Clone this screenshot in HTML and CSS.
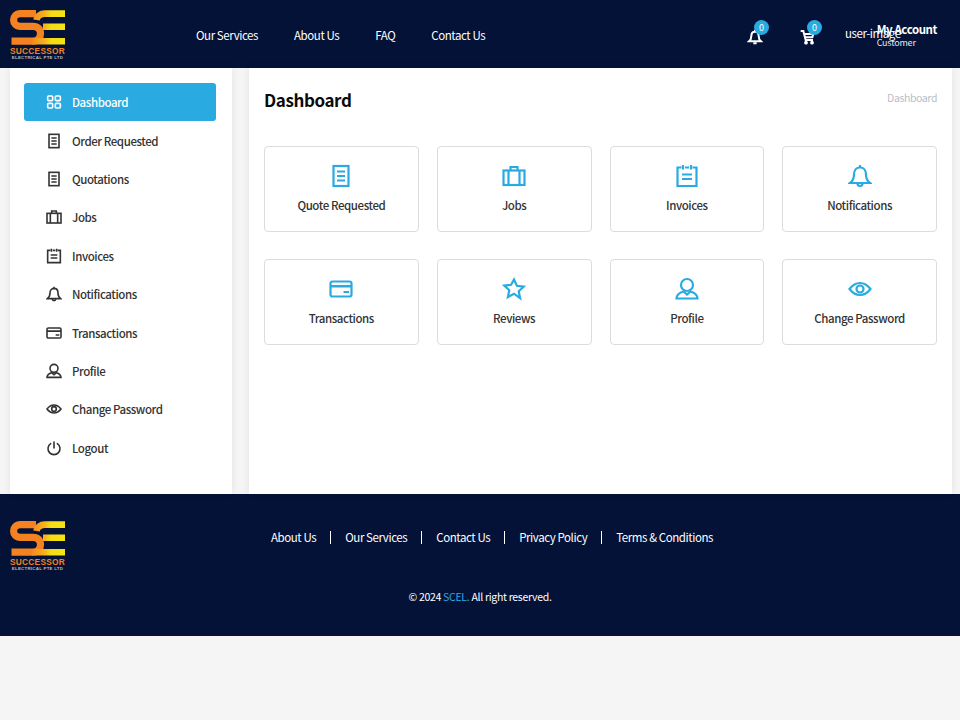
FILE: index.html
```html
<!DOCTYPE html>
<html lang="en">
<head>
<meta charset="utf-8">
<title>Dashboard</title>
<link rel="stylesheet" href="styles.css">
</head>
<body>
<svg class="defs" width="0" height="0" aria-hidden="true">
  <defs>
    <linearGradient id="eg" gradientUnits="userSpaceOnUse" x1="20" x2="55" y1="0" y2="0"><stop offset="0" stop-color="#f58220"/><stop offset=".42" stop-color="#f7b21c"/><stop offset=".6" stop-color="#f5dc14"/><stop offset="1" stop-color="#f5e314"/></linearGradient>
  </defs>
  <symbol id="i-grid" viewBox="0 0 24 24"><g fill="none" stroke="currentColor"><rect x="2.500" y="3" width="7.500" height="7" rx="1.500"/><rect x="14" y="3" width="7.500" height="7" rx="1.500"/><rect x="2.500" y="14" width="7.500" height="7" rx="1.500"/><rect x="14" y="14" width="7.500" height="7" rx="1.500"/></g></symbol>
  <symbol id="i-doc" viewBox="0 0 24 24"><g fill="none" stroke="currentColor"><rect x="4.500" y="2" width="15" height="20"/><path d="M8 7.500h8M8 12h8M8 16.500h8"/></g></symbol>
  <symbol id="i-case" viewBox="0 0 24 24"><g fill="none" stroke="currentColor"><rect x="1.500" y="6.500" width="21" height="14.500"/><path d="M6.500 6.500v14.500M17.500 6.500v14.500M8.500 6.500V3h7v3.500"/></g></symbol>
  <symbol id="i-inv" viewBox="0 0 24 24"><g fill="none" stroke="currentColor"><path d="M6.500 3.500H2.500v18.500h19V3.500h-4M10 3.500h4"/><path d="M8 1v4.500M16 1v4.500M7 10.500h10M7 15h10"/></g></symbol>
  <symbol id="i-bell" viewBox="0 0 24 24"><g fill="none" stroke="currentColor"><path d="M12 3.500c-3.800 0-6 3-6 7 0 4.500-1.200 6.500-4 8.500h20c-2.800-2-4-4-4-8.500 0-4-2.200-7-6-7z"/><path d="M12 1v2.500M9.500 19.500a2.500 2.500 0 0 0 5 0"/></g></symbol>
  <symbol id="i-bell-solid" viewBox="0 0 24 24"><g fill="none" stroke="currentColor" stroke-width="3"><path d="M12 4c-3.500 0-5.500 2.800-5.500 6.500 0 4.500-1 6-3.500 8h18c-2.500-2-3.500-3.500-3.500-8C17.500 6.800 15.500 4 12 4z"/><path d="M12 1v3M9.500 21.500h5"/></g></symbol>
  <symbol id="i-card" viewBox="0 0 24 24"><g fill="none" stroke="currentColor"><rect x="1.500" y="4.500" width="21" height="15" rx="2"/></g><path d="M1.500 8h21v2.500h-21zM14.500 14h5.500v2h-5.500z" fill="currentColor"/></symbol>
  <symbol id="i-star" viewBox="0 0 24 24"><path d="M12 2.500l2.900 6.300 6.900.8-5.100 4.700 1.400 6.800L12 16.700l-6.100 3.400 1.400-6.800-5.100-4.700 6.900-.8z" fill="none" stroke="currentColor"/></symbol>
  <symbol id="i-user" viewBox="0 0 24 24"><g fill="none" stroke="currentColor"><circle cx="12" cy="8" r="6"/><path d="M8.500 14.500C5 15.500 1.800 17.500 1.500 21.500h21c-.3-4-3.500-6-7-7L12 17.500z"/></g></symbol>
  <symbol id="i-eye" viewBox="0 0 24 24"><g fill="none" stroke="currentColor"><path d="M1.500 12C5 7.500 8.500 6 12 6s7 1.500 10.500 6C19 16.500 15.500 18 12 18S5 16.500 1.500 12z"/><circle cx="12" cy="12" r="3.500"/></g></symbol>
  <symbol id="i-power" viewBox="0 0 24 24"><g fill="none" stroke="currentColor" stroke-linecap="round"><path d="M12 3v9M7 5.500a9 9 0 1 0 10 0"/></g></symbol>
  <symbol id="i-cart" viewBox="0 0 24 24"><g fill="none" stroke="currentColor" stroke-width="3"><path d="M1 3h4l3.500 13.500h11"/><path d="M6 7.500h14l-1.500 5H7.500"/></g><circle cx="9" cy="20.500" r="2.800" fill="currentColor"/><circle cx="18" cy="20.500" r="2.800" fill="currentColor"/></symbol>
  <symbol id="logo-mark" viewBox="0 0 55 35">
    <path d="M26 3.600H10.500C6 3.600 3.600 6.500 3.600 10S6 16.300 10.500 16.300H23C28 16.300 30.500 19 30.500 23.500S28 31.200 23 31.200H1.500" fill="none" stroke="#f58220" stroke-width="7.200"/>
    <path d="M55 3.600H35C30.500 3.600 27 6 26.500 10M55 16.800H33M55 31.200H22" fill="none" stroke="url(#eg)" stroke-width="6.600"/>
  </symbol>
</svg>

<header class="topbar">
  <a class="logo" href="#">
    <svg class="logo-svg"><use href="#logo-mark"/></svg>
    <span class="logo-name">SUCCESSOR</span>
    <span class="logo-sub">ELECTRICAL PTE LTD</span>
  </a>
  <nav class="topnav">
    <a href="#">Our Services</a>
    <a href="#">About Us</a>
    <a href="#">FAQ</a>
    <a href="#">Contact Us</a>
  </nav>
  <div class="actions">
    <a class="action" href="#"><svg class="action-icon"><use href="#i-bell-solid"/></svg><span class="badge">0</span></a>
    <a class="action" href="#"><svg class="action-icon"><use href="#i-cart"/></svg><span class="badge">0</span></a>
    <div class="user">
      <span class="user-alt">user-image</span>
      <div class="account"><strong>My Account</strong><span>Customer</span></div>
    </div>
  </div>
</header>

<div class="content">
  <aside class="sidebar">
    <a class="side-item active" href="#"><svg class="side-icon"><use href="#i-grid"/></svg>Dashboard</a>
    <a class="side-item" href="#"><svg class="side-icon"><use href="#i-doc"/></svg>Order Requested</a>
    <a class="side-item" href="#"><svg class="side-icon"><use href="#i-doc"/></svg>Quotations</a>
    <a class="side-item" href="#"><svg class="side-icon"><use href="#i-case"/></svg>Jobs</a>
    <a class="side-item" href="#"><svg class="side-icon"><use href="#i-inv"/></svg>Invoices</a>
    <a class="side-item" href="#"><svg class="side-icon"><use href="#i-bell"/></svg>Notifications</a>
    <a class="side-item" href="#"><svg class="side-icon"><use href="#i-card"/></svg>Transactions</a>
    <a class="side-item" href="#"><svg class="side-icon"><use href="#i-user"/></svg>Profile</a>
    <a class="side-item" href="#"><svg class="side-icon"><use href="#i-eye"/></svg>Change Password</a>
    <a class="side-item" href="#"><svg class="side-icon"><use href="#i-power"/></svg>Logout</a>
  </aside>
  <main class="main">
    <div class="page-head">
      <h1>Dashboard</h1>
      <span class="crumb">Dashboard</span>
    </div>
    <div class="cards">
      <a class="card" href="#"><svg class="card-icon"><use href="#i-doc"/></svg><span>Quote Requested</span></a>
      <a class="card" href="#"><svg class="card-icon"><use href="#i-case"/></svg><span>Jobs</span></a>
      <a class="card" href="#"><svg class="card-icon"><use href="#i-inv"/></svg><span>Invoices</span></a>
      <a class="card" href="#"><svg class="card-icon"><use href="#i-bell"/></svg><span>Notifications</span></a>
      <a class="card" href="#"><svg class="card-icon"><use href="#i-card"/></svg><span>Transactions</span></a>
      <a class="card" href="#"><svg class="card-icon"><use href="#i-star"/></svg><span>Reviews</span></a>
      <a class="card" href="#"><svg class="card-icon"><use href="#i-user"/></svg><span>Profile</span></a>
      <a class="card" href="#"><svg class="card-icon"><use href="#i-eye"/></svg><span>Change Password</span></a>
    </div>
  </main>
</div>

<footer class="footer">
  <a class="logo" href="#">
    <svg class="logo-svg"><use href="#logo-mark"/></svg>
    <span class="logo-name">SUCCESSOR</span>
    <span class="logo-sub">ELECTRICAL PTE LTD</span>
  </a>
  <div class="foot-center">
    <nav class="footnav">
      <a href="#">About Us</a><i></i>
      <a href="#">Our Services</a><i></i>
      <a href="#">Contact Us</a><i></i>
      <a href="#">Privacy Policy</a><i></i>
      <a href="#">Terms &amp; Conditions</a>
    </nav>
    <p class="copy">© 2024 <b>SCEL.</b> All right reserved.</p>
  </div>
</footer>
</body>
</html>
```

FILE: styles.css
```css
* { box-sizing: border-box; }
html, body { margin: 0; padding: 0; }
body {
  background: #f5f5f5;
  font-family: "Noto Sans CJK JP", "Noto Sans", sans-serif;
  color: #333;
  font-size: 11.5px;
  letter-spacing: -.42px;
  line-height: 18px;
}
a { color: inherit; text-decoration: none; }
.defs { position: absolute; }

.topbar {
  height: 68px;
  background: #031236;
  color: #fff;
  display: flex;
  align-items: center;
  padding-left: 10px;
}
.logo {
  width: 55px;
  display: flex;
  flex-direction: column;
  align-items: center;
  flex: none;
  letter-spacing: 0;
}
.topbar .logo { margin-top: 3px; }
.logo-svg { width: 55px; height: 35px; display: block; }
.logo-name {
  font-family: "Liberation Sans", sans-serif;
  font-weight: 700;
  font-size: 8.300px;
  line-height: 9px;
  letter-spacing: .3px;
  margin-top: 2px;
  color: #f58220;
  white-space: nowrap;
}
.logo-sub {
  font-family: "Liberation Sans", sans-serif;
  font-weight: 700;
  font-size: 4.400px;
  line-height: 6px;
  letter-spacing: .25px;
  margin-top: -1px;
  color: #b9bcc6;
  white-space: nowrap;
}
.topnav {
  display: flex;
  gap: 36px;
  margin-left: 131px;
  margin-top: 2px;
}
.actions {
  margin-left: auto;
  display: flex;
  align-items: center;
  padding-right: 23px;
}
.action {
  position: relative;
  display: block;
  width: 16px;
  height: 16px;
  margin-right: 37px;
  margin-top: 6px;
}
.action-icon { width: 16px; height: 16px; display: block; }
.badge {
  position: absolute;
  left: 7px;
  top: -9px;
  width: 15px;
  height: 15px;
  border-radius: 50%;
  background: #29abe2;
  color: #fff;
  font-size: 9px;
  letter-spacing: 0;
  line-height: 15px;
  text-align: center;
}
.user { display: flex; align-items: flex-start; margin-left: -8px; }
.user-alt { white-space: nowrap; margin-top: 4px; }
.account {
  margin-left: -24px;
  display: flex;
  flex-direction: column;
  margin-top: 2px;
}
.account strong { font-weight: 700; line-height: 14px; white-space: nowrap; }
.account span { font-size: 9px; letter-spacing: -.2px; line-height: 12px; margin-top: 1px; color: #e4e6eb; }

.content {
  display: flex;
  height: 426px;
  padding: 0 8px 0 10px;
  gap: 17px;
}
.sidebar {
  width: 222px;
  flex: none;
  background: #fff;
  padding: 15px 16px 0 14px;
  box-shadow: 0 0 8px rgba(0, 0, 0, .08);
}
.side-item {
  height: 38.4px;
  display: flex;
  align-items: center;
  padding-left: 22px;
  gap: 10px;
  color: #333;
  font-weight: 500;
}
.side-item.active {
  background: #29abe2;
  color: #fff;
  border-radius: 3px;
  height: 38px;
  margin-bottom: .4px;
}
.side-icon { width: 16px; height: 16px; flex: none; stroke-width: 2.4px; }

.main {
  flex: 1;
  background: #fff;
  padding: 20px 15px 0;
  box-shadow: 0 0 8px rgba(0, 0, 0, .08);
}
.page-head {
  display: flex;
  justify-content: space-between;
  align-items: flex-start;
  height: 58px;
}
.page-head h1 {
  margin: 0;
  font-size: 17px;
  letter-spacing: -.4px;
  line-height: 24px;
  font-weight: 700;
  color: #0b0b0b;
}
.crumb { font-size: 10.500px; letter-spacing: -.4px; line-height: 20px; color: #b8bec8; }
.cards {
  display: grid;
  grid-template-columns: repeat(4, 1fr);
  gap: 27px 18px;
}
.card {
  height: 86px;
  background: #fff;
  border: 1px solid #dcdcdc;
  border-radius: 4px;
  display: flex;
  flex-direction: column;
  align-items: center;
  padding-top: 17px;
  font-weight: 500;
  color: #333;
}
.card-icon { width: 24px; height: 24px; color: #29abe2; margin-bottom: 8px; stroke-width: 2.2px; }

.footer {
  height: 142px;
  background: #031236;
  color: #fff;
  display: flex;
  padding: 27px 0 0 10px;
}
.foot-center {
  flex: 1;
  display: flex;
  flex-direction: column;
  align-items: center;
  padding-right: 65px;
}
.footnav {
  display: flex;
  align-items: center;
  gap: 14px;
  margin-top: 7px;
  margin-left: 24px;
}
.footnav i { width: 1px; height: 13px; background: #fff; }
.copy { margin: 42px 0 0; font-size: 10.500px; letter-spacing: -.3px; line-height: 18px; }
.copy b { font-weight: 400; color: #29abe2; }
```
